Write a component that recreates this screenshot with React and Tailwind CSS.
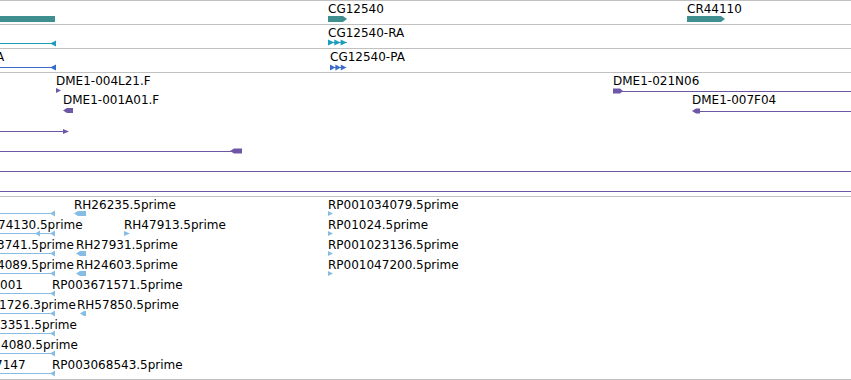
import React from "react";

const TEAL = "#3f8f90";
const CYAN = "#1e9cbc";
const BLUE = "#3a6bc8";
const PURPLE = "#6e57a6";
const LBLUE = "#86bde3";

function Label({ x, y, children }) {
  return (
    <span
      className="absolute whitespace-nowrap font-['DejaVu_Sans',sans-serif] text-[12px] leading-[14px] text-black"
      style={{ left: x, top: y }}
    >
      {children}
    </span>
  );
}

function Track({ h, labels, children }) {
  return (
    <div className="relative overflow-hidden border-b border-[#c0c0c0]" style={{ height: h }}>
      <svg className="absolute left-0 top-0" width="851" height={h - 1} shapeRendering="crispEdges">
        {children}
      </svg>
      {labels.map((l, i) => (
        <Label key={i} x={l[1]} y={l[2]}>
          {l[0]}
        </Label>
      ))}
    </div>
  );
}

const leftBlock = (x, y, w, c) => (
  <polygon
    points={`${x},${y + 0.5} ${x + 4},${y - 2} ${x + w},${y - 2} ${x + w},${y + 3} ${x + 4},${y + 3}`}
    fill={c}
    shapeRendering="auto"
  />
);
const rightTri = (x, y, w, c) => (
  <polygon points={`${x},${y - 2} ${x + w},${y + 0.5} ${x},${y + 3}`} fill={c} shapeRendering="auto" />
);
const leftTri = (x, y, w, c) => (
  <polygon points={`${x},${y + 0.5} ${x + w},${y - 2.5} ${x + w},${y + 3.5}`} fill={c} shapeRendering="auto" />
);

const triple = (x, y, c, step) => (
  <g shapeRendering="auto">
    <rect x={x} y={y} width={step * 3} height={1} fill={c} />
    {[0, 1, 2].map((i) => (
      <polygon
        key={i}
        points={`${x + i * step},${y - 2.5} ${x + i * step + step},${y + 0.5} ${x + i * step},${y + 3.5}`}
        fill={c}
      />
    ))}
  </g>
);

export default function App() {
  const rows = [0, 1, 2, 3, 4, 5, 6, 7, 8];
  return (
    <div className="w-[851px] h-[380px] overflow-hidden bg-white border-t border-[#c0c0c0]">
      <Track
        h={24}
        labels={[
          ["CG12540", 328, 1],
          ["CR44110", 687, 1],
        ]}
      >
        <rect x="0" y="15" width="55" height="6" fill={TEAL} />
        <polygon points="328,15 343,15 347,18 343,21 328,21" fill={TEAL} shapeRendering="auto" />
        <polygon points="687,15 721,15 725,18 721,21 687,21" fill={TEAL} shapeRendering="auto" />
      </Track>
      <Track h={24} labels={[["CG12540-RA", 328, 1]]}>
        <rect x="0" y="18" width="52" height="1" fill={CYAN} />
        {leftTri(50, 18, 6, CYAN)}
        {triple(328, 17, CYAN, 6.3)}
      </Track>
      <Track
        h={24}
        labels={[
          ["A", -4, 1],
          ["CG12540-PA", 330, 1],
        ]}
      >
        <rect x="0" y="18" width="52" height="1" fill={BLUE} />
        {leftTri(50, 18, 6, BLUE)}
        {triple(330, 18, BLUE, 5.4)}
      </Track>
      <Track
        h={124}
        labels={[
          ["DME1-004L21.F", 56, 1],
          ["DME1-001A01.F", 63, 20],
          ["DME1-021N06", 613, 1],
          ["DME1-007F04", 692, 20],
        ]}
      >
        {rightTri(56, 17, 5, PURPLE)}
        {leftBlock(63, 37, 10, PURPLE)}
        <rect x="0" y="58" width="64" height="1" fill={PURPLE} />
        {rightTri(63, 58, 6, PURPLE)}
        <rect x="0" y="78" width="232" height="1" fill={PURPLE} />
        {leftBlock(230, 77.5, 12, PURPLE)}
        <rect x="0" y="98" width="851" height="1" fill={PURPLE} />
        <rect x="0" y="118" width="851" height="1" fill={PURPLE} />
        <polygon points="613,15.5 620,15.5 623,18 620,20.5 613,20.5" fill={PURPLE} shapeRendering="auto" />
        <rect x="613" y="18" width="238" height="1" fill={PURPLE} />
        {leftBlock(692, 37.5, 8, PURPLE)}
        <rect x="696" y="38" width="155" height="1" fill={PURPLE} />
      </Track>
      <Track
        h={183}
        labels={[
          ["RH26235.5prime", 74, 1],
          ["RP001034079.5prime", 328, 1],
          ["74130.5prime", -2, 21],
          ["RH47913.5prime", 124, 21],
          ["RP01024.5prime", 328, 21],
          ["3741.5prime", -3, 41],
          ["RH27931.5prime", 76, 41],
          ["RP001023136.5prime", 328, 41],
          ["4089.5prime", -3, 61],
          ["RH24603.5prime", 76, 61],
          ["RP001047200.5prime", 328, 61],
          ["001", 0, 81],
          ["RP003671571.5prime", 52, 81],
          ["1726.3prime", -1, 101],
          ["RH57850.5prime", 77, 101],
          ["3351.5prime", 0, 121],
          ["4080.5prime", 1, 141],
          ["7147", -5, 161],
          ["RP003068543.5prime", 52, 161],
        ]}
      >
        {rows.map((i) => (
          <g key={i}>
            <rect x="0" y={16 + 20 * i} width="52" height="1" fill={LBLUE} />
            {leftTri(50, 16 + 20 * i, 5, LBLUE)}
          </g>
        ))}
        {leftTri(35, 36, 5, LBLUE)}
        {leftBlock(74, 16, 12, LBLUE)}
        {rightTri(124, 36, 6, LBLUE)}
        {leftBlock(76, 56, 10, LBLUE)}
        {leftBlock(76, 76, 10, LBLUE)}
        {leftBlock(80, 116, 6, LBLUE)}
        {[0, 1, 2, 3].map((i) => (
          <g key={i}>{rightTri(328, 16 + 20 * i, 5, LBLUE)}</g>
        ))}
      </Track>
    </div>
  );
}
